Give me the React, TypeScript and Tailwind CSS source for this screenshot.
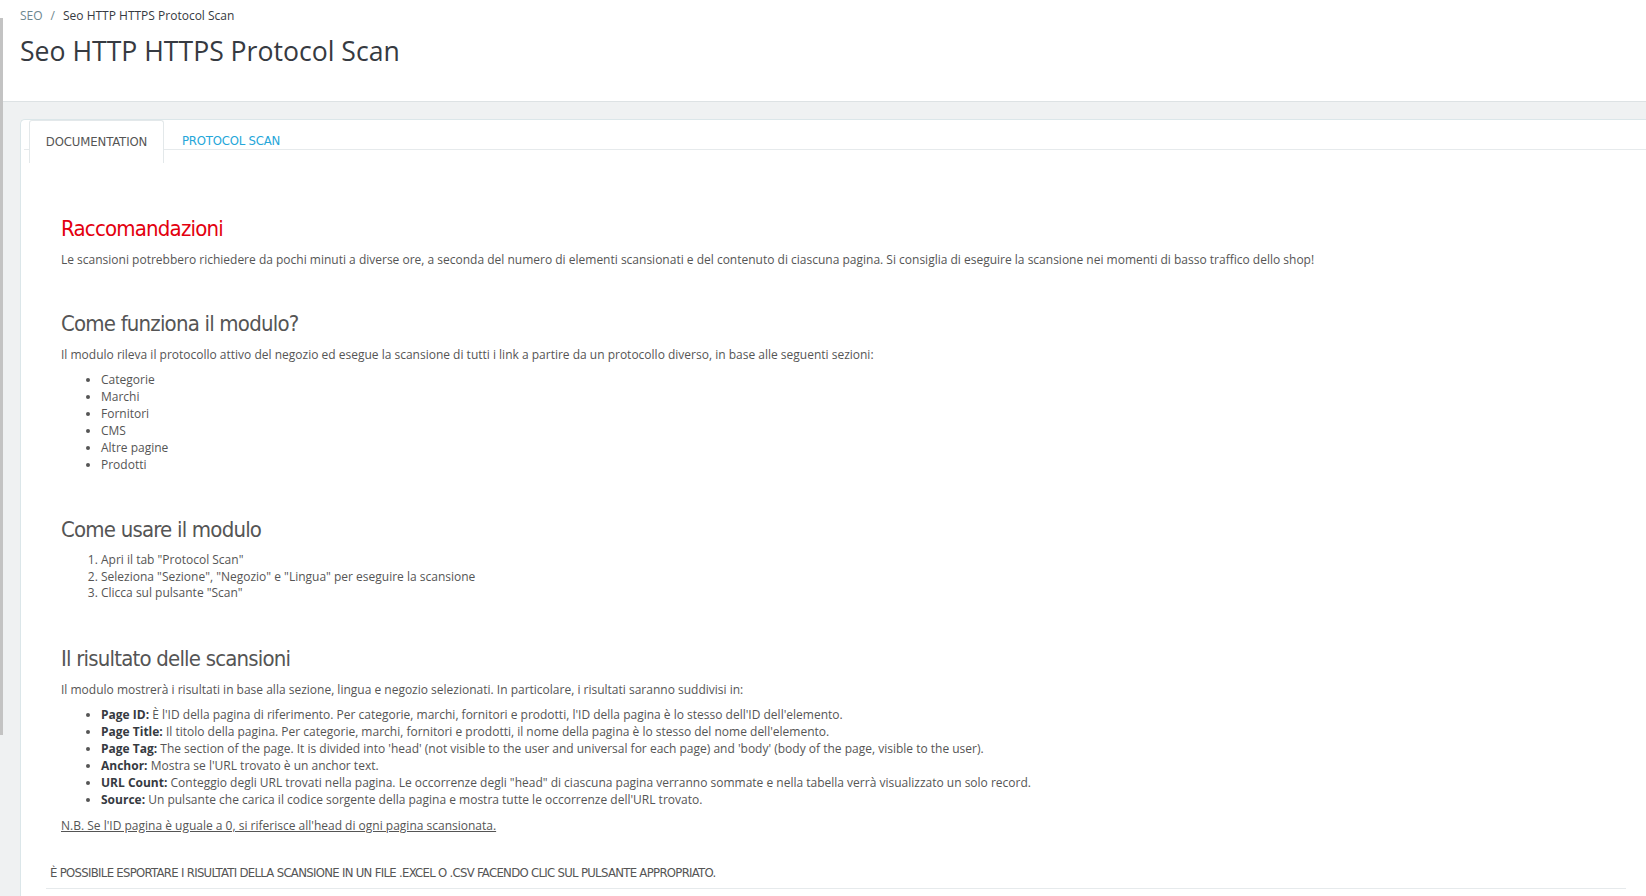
import React from 'react';

const body = { fontFamily: '"Open Sans", "Liberation Sans", sans-serif' };
const cond = { fontFamily: '"DejaVu Sans Condensed", "DejaVu Sans", sans-serif', fontStretch: 'condensed' as const };

const sections = ['Categorie', 'Marchi', 'Fornitori', 'CMS', 'Altre pagine', 'Prodotti'];

const steps = [
  'Apri il tab "Protocol Scan"',
  'Seleziona "Sezione", "Negozio" e "Lingua" per eseguire la scansione',
  'Clicca sul pulsante "Scan"',
];

const results = [
  { label: 'Page ID:', text: "È l'ID della pagina di riferimento. Per categorie, marchi, fornitori e prodotti, l'ID della pagina è lo stesso dell'ID dell'elemento." },
  { label: 'Page Title:', text: "Il titolo della pagina. Per categorie, marchi, fornitori e prodotti, il nome della pagina è lo stesso del nome dell'elemento." },
  { label: 'Page Tag:', text: "The section of the page. It is divided into 'head' (not visible to the user and universal for each page) and 'body' (body of the page, visible to the user)." },
  { label: 'Anchor:', text: "Mostra se l'URL trovato è un anchor text." },
  { label: 'URL Count:', text: 'Conteggio degli URL trovati nella pagina. Le occorrenze degli "head" di ciascuna pagina verranno sommate e nella tabella verrà visualizzato un solo record.' },
  { label: 'Source:', text: "Un pulsante che carica il codice sorgente della pagina e mostra tutte le occorrenze dell'URL trovato." },
];

function Heading({ children, red = false }: { children: React.ReactNode; red?: boolean }) {
  return (
    <h3
      style={cond}
      className={`text-[22px] leading-[26px] tracking-[-0.8px] mb-[9px] ${red ? 'text-[#e3000f]' : 'text-[#555555]'}`}
    >
      {children}
    </h3>
  );
}

export default function App() {
  return (
    <div style={body} className="min-h-[896px] w-[1646px] overflow-hidden bg-[#eff1f2] flex text-[#555555]">
      <div className="w-[3px] shrink-0 flex flex-col">
        <div className="h-[18px] bg-white" />
        <div className="h-[717px] bg-[#c3c3c3]" />
      </div>

      <div className="flex-1 flex flex-col">
        <div className="h-[102px] bg-white border-b border-[#dde2e4] pl-[17px] pt-[7px]">
          <div className="text-[12px] leading-[18px] flex items-center">
            <span className="text-[#6c868e]">SEO</span>
            <span className="text-[#6c868e] mx-[8px]">/</span>
            <span className="text-[#363a41]">Seo HTTP HTTPS Protocol Scan</span>
          </div>
          <h1 className="text-[26.6px] leading-[36px] mt-[8px] text-[#363a41]">
            Seo HTTP HTTPS Protocol Scan
          </h1>
        </div>

        <div className="pl-[17px] pt-[17px]">
          <div className="bg-white border-l border-t border-[#dbe6e9] rounded-tl-[5px] min-h-[780px]">
            <div className="ml-[3px] pl-[5px] border-b border-[#e6eaec] flex h-[30px] items-start">
              <div
                style={cond}
                className="relative z-10 bg-white border-x border-t border-[#e3e8ea] rounded-t-[3px] h-[43px] w-[135px] text-center pt-[13px] text-[13px] leading-[16px] tracking-[-0.1px] text-[#555555]"
              >
                DOCUMENTATION
              </div>
              <div
                style={cond}
                className="pt-[13px] pl-[18px] text-[13px] leading-[16px] tracking-[-0.2px] text-[#25a6d9]"
              >
                PROTOCOL SCAN
              </div>
            </div>

            <div className="pl-[29px] pr-[20px] pt-[66px]">
              <div className="pl-[11px] text-[12px] leading-[17px]">
                <Heading red>Raccomandazioni</Heading>
                <p className="mb-[43px]">
                  Le scansioni potrebbero richiedere da pochi minuti a diverse ore, a seconda del numero di elementi scansionati e del contenuto di ciascuna pagina. Si consiglia di eseguire la scansione nei momenti di basso traffico dello shop!
                </p>

                <Heading>Come funziona il modulo?</Heading>
                <p className="mb-[8px]">
                  Il modulo rileva il protocollo attivo del negozio ed esegue la scansione di tutti i link a partire da un protocollo diverso, in base alle seguenti sezioni:
                </p>
                <ul className="list-disc pl-[40px] mb-[44px]">
                  {sections.map((s) => (
                    <li key={s}>{s}</li>
                  ))}
                </ul>

                <Heading>Come usare il modulo</Heading>
                <ol className="list-decimal pl-[40px] mb-[44px]">
                  {steps.map((s) => (
                    <li key={s} className="leading-[16.5px]">{s}</li>
                  ))}
                </ol>

                <Heading>Il risultato delle scansioni</Heading>
                <p className="mb-[8px]">
                  Il modulo mostrerà i risultati in base alla sezione, lingua e negozio selezionati. In particolare, i risultati saranno suddivisi in:
                </p>
                <ul className="list-disc pl-[40px] mb-[9px]">
                  {results.map((r) => (
                    <li key={r.label}>
                      <strong className="font-bold text-[#363a41]">{r.label}</strong> {r.text}
                    </li>
                  ))}
                </ul>
                <p className="underline">
                  N.B. Se l'ID pagina è uguale a 0, si riferisce all'head di ogni pagina scansionata.
                </p>
              </div>

              <div
                style={cond}
                className="mt-[30px] -ml-[4px] pl-[4px] pb-[6px] border-b border-[#e6eaec] text-[13px] leading-[18px] tracking-[-0.7px] text-[#555555]"
              >
                È POSSIBILE ESPORTARE I RISULTATI DELLA SCANSIONE IN UN FILE .EXCEL O .CSV FACENDO CLIC SUL PULSANTE APPROPRIATO.
              </div>
            </div>
          </div>
        </div>
      </div>
    </div>
  );
}
